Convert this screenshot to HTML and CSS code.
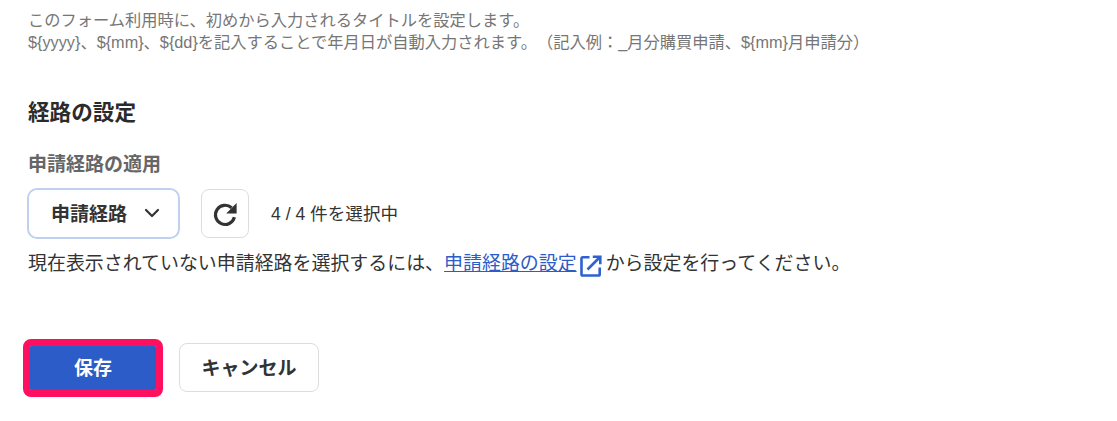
FILE: index.html
```html
<!DOCTYPE html>
<html lang="ja">
<head>
  <meta charset="UTF-8">
  <meta name="viewport" content="width=device-width, initial-scale=1.0">
  <title>経路の設定</title>
  <link rel="stylesheet" href="styles.css">
</head>
<body>
  <div class="form-container">
    <div class="help-text">
      <p>このフォーム利用時に、初めから入力されるタイトルを設定します。</p>
      <p>${yyyy}、${mm}、${dd}を記入することで年月日が自動入力されます。（記入例：_月分購買申請、${mm}月申請分）</p>
    </div>

    <h2 class="section-title">経路の設定</h2>
    <h3 class="field-label">申請経路の適用</h3>

    <div class="route-row">
      <button type="button" class="route-select">
        <span>申請経路</span>
        <svg class="chevron" width="16" height="16" viewBox="0 0 16 16" fill="none" stroke="#333" stroke-width="2.2" stroke-linecap="round" stroke-linejoin="round">
          <path d="M2 5 8 11l6-6"/>
        </svg>
      </button>
      <button type="button" class="refresh-button" aria-label="更新">
        <svg width="28" height="28" viewBox="0 0 28 28" fill="none">
          <path d="M23.4 17.2A9.6 9.6 0 1 1 20.6 7.8" stroke="#333" stroke-width="3.2"/>
          <path d="M25.6 3v10.4H15.2z" fill="#333"/>
        </svg>
      </button>
      <span class="route-count">4 / 4 件を選択中</span>
    </div>

    <p class="route-note">現在表示されていない申請経路を選択するには、<a href="#">申請経路の設定</a><svg class="external-icon" width="22" height="22" viewBox="0 0 22 22" fill="none" stroke="#2f62cf" stroke-width="2.6">
        <path d="M9.5 2.3H2.8a1.3 1.3 0 0 0-1.3 1.3v15.6a1.3 1.3 0 0 0 1.3 1.3h15.6a1.3 1.3 0 0 0 1.3-1.3v-6.7"/>
        <path d="M7.5 14.5 19 3"/>
        <path d="M12.8 1.7h7.5v7.5"/>
      </svg>から設定を行ってください。</p>

    <div class="form-actions">
      <button type="button" class="save-button">保存</button>
      <button type="button" class="cancel-button">キャンセル</button>
    </div>
  </div>
</body>
</html>
```

FILE: styles.css
```css
body {
  font-family: "Liberation Sans", "Noto Sans CJK JP", sans-serif;
  background-color: #fff;
  color: #333;
  margin: 0;
  padding: 0;
  text-spacing-trim: space-all;
}
button {
  font-family: inherit;
  cursor: pointer;
}
.form-container {
  padding: 9px 28px 24px;
}
.help-text {
  color: #767676;
  font-size: 16.25px;
  line-height: 22px;
}
.help-text p {
  margin: 0;
}
.section-title {
  margin: 44px 0 0;
  font-size: 21.6px;
  line-height: 32px;
  font-weight: 700;
  color: #2b2b2b;
}
.field-label {
  margin: 22px 0 0;
  font-size: 19px;
  line-height: 28px;
  font-weight: 700;
  color: #666;
}
.route-row {
  display: flex;
  align-items: center;
  margin: 9px 0 0 -1px;
}
.route-select {
  display: flex;
  align-items: center;
  gap: 17px;
  width: 153px;
  height: 51px;
  box-sizing: border-box;
  padding: 0 0 2px 22px;
  background-color: #fff;
  border: 2.5px solid #c0d0f2;
  border-radius: 10px;
  color: #333;
  font-size: 19px;
  font-weight: 700;
}
.refresh-button {
  display: flex;
  align-items: center;
  justify-content: center;
  width: 48px;
  height: 49px;
  box-sizing: border-box;
  margin-left: 21px;
  padding: 0;
  background-color: #fff;
  border: 1px solid #ddd;
  border-radius: 8px;
}
.route-count {
  margin-left: 22px;
  padding-bottom: 3px;
  font-size: 17.6px;
}
.route-note {
  display: flex;
  align-items: center;
  margin: 11px 0 0;
  font-size: 18.95px;
  line-height: 28px;
}
.route-note a {
  color: #2b5cc8;
  text-decoration: underline;
}
.external-icon {
  margin: 4px 4px 0 3px;
}
.form-actions {
  display: flex;
  align-items: flex-start;
  gap: 16px;
  margin: 61px 0 0 -5px;
}
.save-button {
  width: 140px;
  height: 58px;
  box-sizing: border-box;
  padding: 0 0 3px;
  background-color: #2b5cc8;
  background-clip: padding-box;
  border: 7px solid #ff0f5f;
  border-radius: 8px;
  color: #fff;
  font-size: 19px;
  font-weight: 700;
}
.cancel-button {
  width: 140px;
  height: 49px;
  box-sizing: border-box;
  margin-top: 4px;
  padding: 0 0 3px;
  background-color: #fff;
  border: 1px solid #ddd;
  border-radius: 8px;
  color: #333;
  font-size: 19px;
  font-weight: 700;
}
```
